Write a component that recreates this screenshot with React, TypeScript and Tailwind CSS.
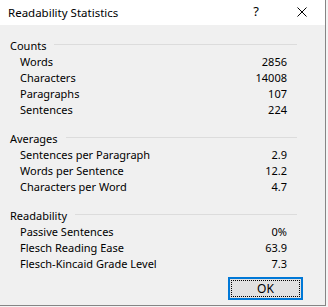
import React from 'react';

type Row = { label: string; value: string };

const SECTIONS: { title: string; rows: Row[] }[] = [
  {
    title: 'Counts',
    rows: [
      { label: 'Words', value: '2856' },
      { label: 'Characters', value: '14008' },
      { label: 'Paragraphs', value: '107' },
      { label: 'Sentences', value: '224' },
    ],
  },
  {
    title: 'Averages',
    rows: [
      { label: 'Sentences per Paragraph', value: '2.9' },
      { label: 'Words per Sentence', value: '12.2' },
      { label: 'Characters per Word', value: '4.7' },
    ],
  },
  {
    title: 'Readability',
    rows: [
      { label: 'Passive Sentences', value: '0%' },
      { label: 'Flesch Reading Ease', value: '63.9' },
      { label: 'Flesch-Kincaid Grade Level', value: '7.3' },
    ],
  },
];

function Section({ title, rows }: { title: string; rows: Row[] }) {
  return (
    <div className="flex flex-col">
      {/* group header with rule */}
      <div className="flex h-[16px] items-center gap-[8px]">
        <span className="leading-[16px]">{title}</span>
        <div className="mt-[-3px] h-px flex-1 bg-[#dcdcdc]" />
      </div>
      {rows.map((r) => (
        <div key={r.label} className="flex h-[16px] items-center pl-[10px] pr-[10px]">
          <span className="leading-[16px]">{r.label}</span>
          <span className="ml-auto leading-[16px]">{r.value}</span>
        </div>
      ))}
    </div>
  );
}

export default function App() {
  return (
    <div
      className="h-[307px] w-[328px] bg-[#f4f4f4] text-[11px] text-black"
      style={{ fontFamily: '"Noto Sans", "Liberation Sans", sans-serif' }}
    >
      <div className="flex h-[306px] w-[326px] flex-col border-b border-r border-[#858585] bg-[#f0f0f0]">
        {/* Title bar */}
        <div className="flex h-[25px] shrink-0 items-center bg-white">
          <span className="pl-[8px] text-[11.5px]">Readability Statistics</span>
          <div className="ml-auto flex h-full">
            <div className="flex w-[46px] items-center justify-center pb-[1px] text-[13px]">?</div>
            <div className="flex w-[46px] items-center justify-center">
              <svg width="10" height="10" viewBox="0 0 10 10" className="mb-[1px]">
                <path d="M0.5 0.5 L9.5 9.5 M9.5 0.5 L0.5 9.5" stroke="#000" strokeWidth="1" fill="none" />
              </svg>
            </div>
          </div>
        </div>

        {/* Body */}
        <div className="flex flex-col gap-[13px] pl-[10px] pr-[28px] pt-[13px]">
          {SECTIONS.map((s) => (
            <Section key={s.title} title={s.title} rows={s.rows} />
          ))}
        </div>

        <div className="flex justify-end pr-[22px] pt-[5px]">
          <button className="flex h-[23px] w-[75px] items-center justify-center border-2 border-[#0078d7] bg-[#e1e1e1] p-px">
            <span className="flex h-full w-full items-center justify-center border border-dotted border-black text-[12px] leading-none">
              OK
            </span>
          </button>
        </div>
      </div>
    </div>
  );
}
